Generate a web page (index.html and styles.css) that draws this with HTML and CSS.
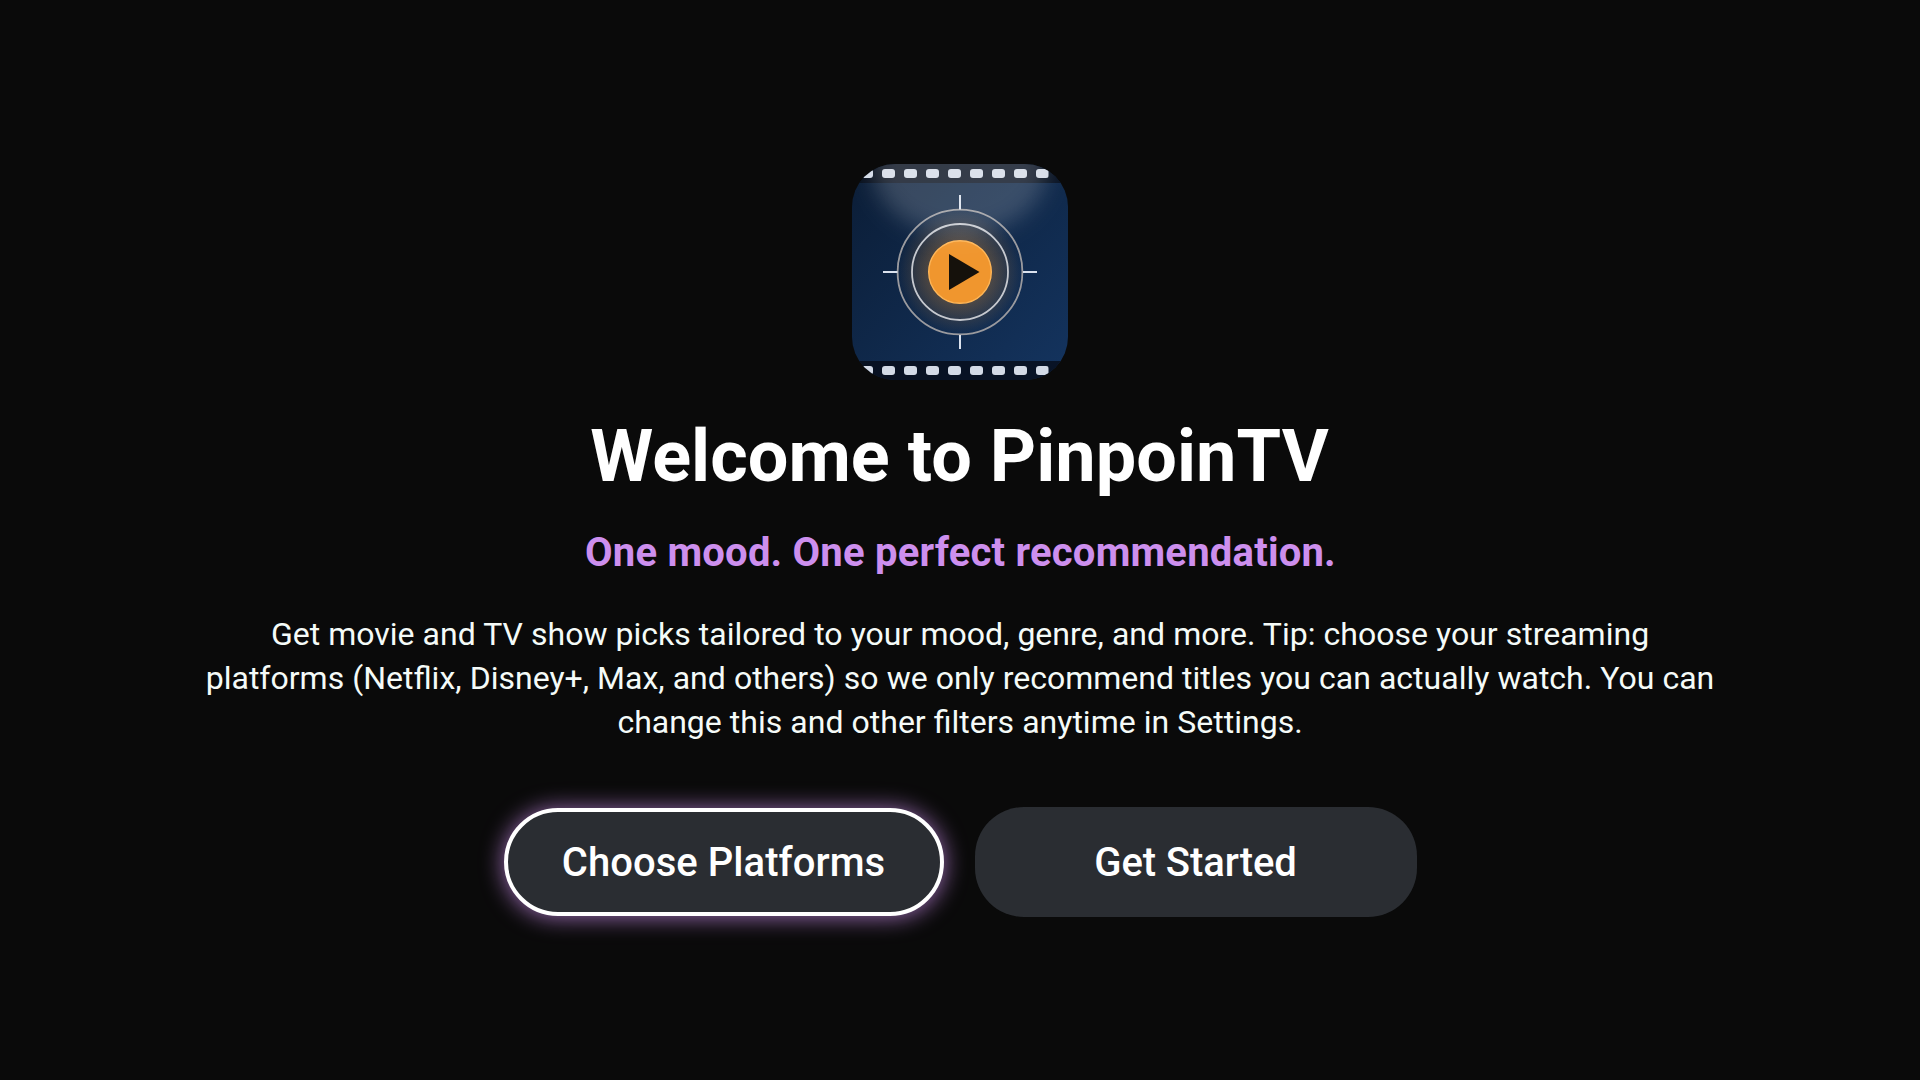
FILE: index.html
```html
<!DOCTYPE html>
<html lang="en">
<head>
<meta charset="utf-8">
<title>PinpoinTV</title>
<link rel="stylesheet" href="styles.css">
</head>
<body>
<main class="welcome">
  <svg class="logo" viewBox="0 0 216 216" aria-hidden="true">
    <defs>
      <linearGradient id="navy" x1="0" y1="0" x2="1" y2="1">
        <stop offset="0" stop-color="#0b1d36"/>
        <stop offset="1" stop-color="#14345f"/>
      </linearGradient>
      <radialGradient id="glow">
        <stop offset="0.5" stop-color="#f59a2f" stop-opacity="0.27"/>
        <stop offset="0.75" stop-color="#f59a2f" stop-opacity="0.13"/>
        <stop offset="1" stop-color="#f59a2f" stop-opacity="0"/>
      </radialGradient>
      <filter id="soft" x="-30%" y="-30%" width="160%" height="160%"><feGaussianBlur stdDeviation="11"/></filter>
      <clipPath id="tile"><rect width="216" height="216" rx="43"/></clipPath>
      <pattern id="holes" x="8" width="22" height="9" patternUnits="userSpaceOnUse">
        <rect width="13" height="9" rx="3" fill="#d3dae6"/>
      </pattern>
    </defs>
    <g clip-path="url(#tile)">
      <rect width="216" height="216" fill="url(#navy)"/>
      <rect width="216" height="19" fill="#050a14" fill-opacity="0.7"/>
      <rect y="197" width="216" height="19" fill="#050a14" fill-opacity="0.75"/>
      <rect width="188.5" height="9" x="8" fill="url(#holes)" transform="translate(0 5)"/>
      <rect width="188.5" height="9" x="8" fill="url(#holes)" transform="translate(0 202)"/>
      <circle cx="108" cy="108" r="62" fill="url(#glow)"/>
      <g fill="none">
        <circle cx="108" cy="108" r="62.4" stroke="#9a9a9e" stroke-width="1.8"/>
        <circle cx="108" cy="108" r="48" stroke="#c6c9cf" stroke-width="1.8"/>
        <path d="M108 31v14.5M108 171v14M31 108h14.5M171 108h14" stroke="#dbe2ee" stroke-width="2"/>
      </g>
      <circle cx="108" cy="108" r="31.3" fill="#f0962e" stroke="#ffb657" stroke-width="1.4"/>
      <path d="M97 90v36l30.5-18z" fill="#15110b"/>
      <ellipse cx="108" cy="2" rx="88" ry="69" fill="#fff" fill-opacity="0.18" filter="url(#soft)"/>
    </g>
  </svg>
  <h1 class="title">Welcome to PinpoinTV</h1>
  <p class="tagline">One mood. One perfect recommendation.</p>
  <p class="description">Get movie and TV show picks tailored to your mood, genre, and more. Tip: choose your streaming platforms (Netflix, Disney+, Max, and others) so we only recommend titles you can actually watch. You can change this and other filters anytime in Settings.</p>
  <div class="actions">
    <button class="button button-focused">Choose Platforms</button>
    <button class="button">Get Started</button>
  </div>
</main>
</body>
</html>
```
FILE: styles.css
```css
* {
  box-sizing: border-box;
}

body {
  margin: 0;
  background: #0a0a0a;
  color: #fff;
  font-family: Roboto, sans-serif;
}

.welcome {
  height: 1080px;
  padding-top: 164px;
  display: flex;
  flex-direction: column;
  align-items: center;
  text-align: center;
}

.logo {
  width: 216px;
  height: 216px;
  flex: none;
}

.title {
  margin: 35px 1px 0 0;
  font-size: 72px;
  line-height: 84px;
  font-weight: 700;
  letter-spacing: 0.04px;
}

.tagline {
  margin: 30px 0 0 1px;
  font-size: 40px;
  line-height: 47px;
  font-weight: 700;
  letter-spacing: 0.21px;
  color: #cd8fee;
}

.description {
  width: 1520px;
  margin: 36px 0 0;
  font-size: 32px;
  line-height: 44px;
  word-spacing: 0.15px;
  color: #f5fbf8;
}

.actions {
  display: flex;
  align-items: center;
  gap: 31px;
  margin-top: 63px;
}

.button {
  width: 442px;
  height: 110px;
  padding: 0;
  border: 0;
  border-radius: 49px;
  background: #2a2d32;
  color: #fff;
  font: 500 40px/47px Roboto, sans-serif;
  letter-spacing: -0.1px;
}

.button-focused {
  width: 440px;
  height: 108px;
  border: 4px solid #fff;
  border-radius: 54px;
  letter-spacing: 0.05px;
  box-shadow: 0 1px 22px 1px rgba(205, 143, 238, 0.7);
}
```
